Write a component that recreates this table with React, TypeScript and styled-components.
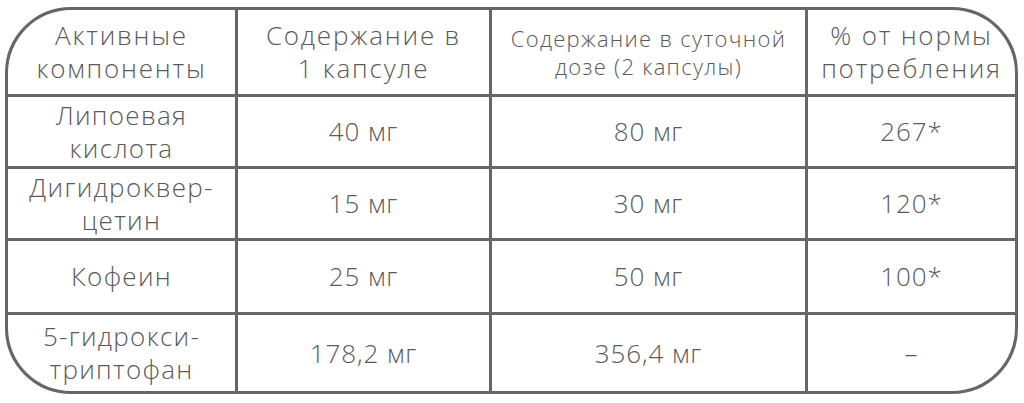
import React from 'react';
import styled, { createGlobalStyle } from 'styled-components';

const GlobalStyle = createGlobalStyle`
  html, body {
    margin: 0;
    padding: 0;
    background: #ffffff;
  }
  body {
    font-family: 'Open Sans', 'Roboto', 'Liberation Sans', sans-serif;
  }
`;

const Page = styled.div`
  width: 1024px;
  height: 403px;
  box-sizing: border-box;
  padding: 7px 6px 0 5px;
`;

const Table = styled.div`
  display: grid;
  grid-template-columns: 227px 251px 313px 207px;
  grid-template-rows: 84px 69px 69px 71px 76px;
  gap: 3px;
  width: 1013px;
  height: 387px;
  box-sizing: border-box;
  border: 3px solid #666666;
  border-radius: 66px;
  background: #666666;
  overflow: hidden;
`;

type Kind = 'head' | 'headSmall' | 'name' | 'value';

const spacing: Record<Kind, string> = {
  head: '1.8px',
  headSmall: '1.3px',
  name: '1.3px',
  value: '0.9px',
};

const Cell = styled.div<{ kind: Kind }>`
  display: flex;
  align-items: center;
  justify-content: center;
  text-align: center;
  background: #ffffff;
  color: #5a5a5a;
  font-weight: 300;
  font-size: ${({ kind }) => (kind === 'headSmall' ? '22px' : '26px')};
  line-height: ${({ kind }) => (kind === 'headSmall' ? '28px' : '33px')};
  letter-spacing: ${({ kind }) => spacing[kind]};
  white-space: pre-line;
`;

const header = ['Активные\nкомпоненты', 'Содержание в\n1 капсуле', 'Содержание в суточной\nдозе (2 капсулы)', '% от нормы\nпотребления'];

const rows: string[][] = [
  ['Липоевая\nкислота', '40 мг', '80 мг', '267*'],
  ['Дигидроквер-\nцетин', '15 мг', '30 мг', '120*'],
  ['Кофеин', '25 мг', '50 мг', '100*'],
  ['5-гидрокси-\nтриптофан', '178,2 мг', '356,4 мг', '–'],
];

const App: React.FC = () => {
  return (
    <>
      <GlobalStyle />
      <Page>
        <Table>
          {header.map((h, i) => (
            <Cell key={'h' + i} kind={i === 2 ? 'headSmall' : 'head'}>
              {h}
            </Cell>
          ))}
          {rows.map((r, ri) =>
            r.map((c, ci) => (
              <Cell key={ri + '-' + ci} kind={ci === 0 ? 'name' : 'value'}>
                {c}
              </Cell>
            ))
          )}
        </Table>
      </Page>
    </>
  );
};

export default App;
